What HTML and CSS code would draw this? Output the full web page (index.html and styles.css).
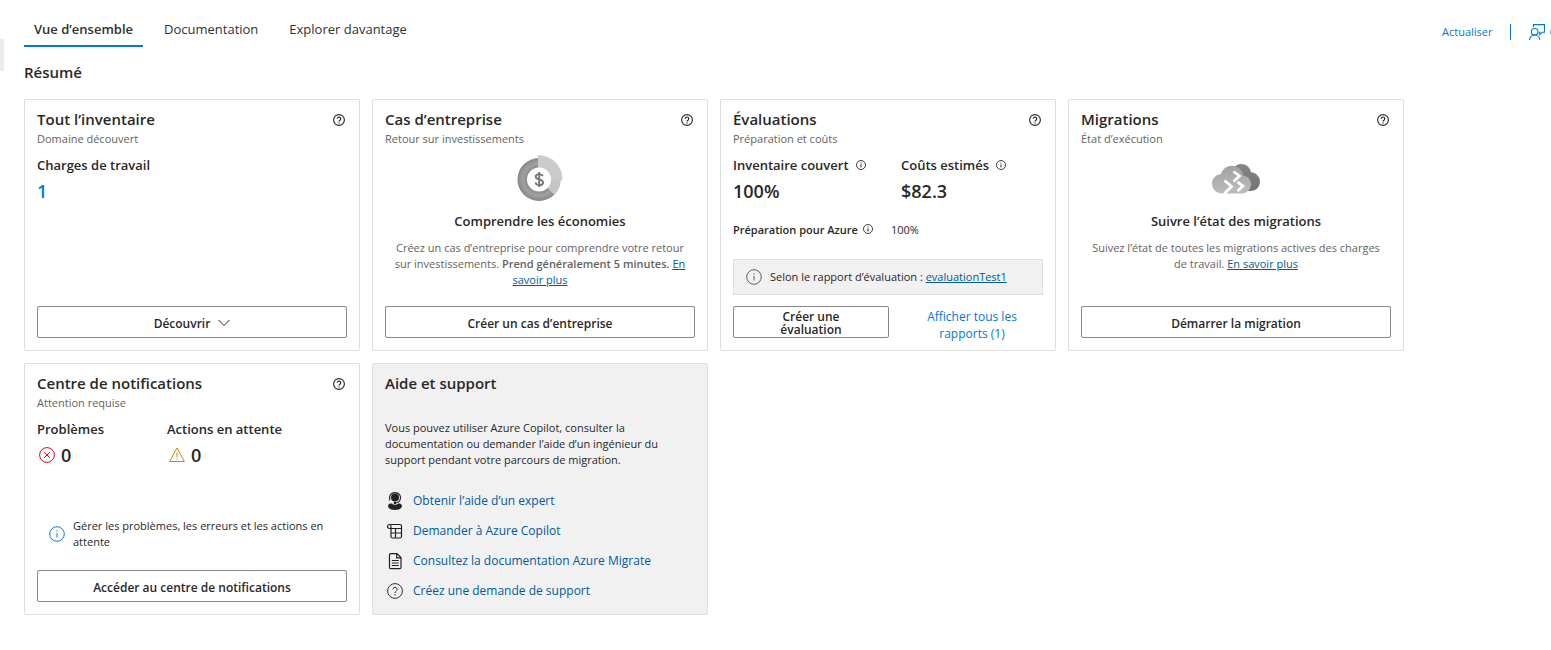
FILE: index.html
```html
<!DOCTYPE html>
<html lang="fr">
<head>
<meta charset="utf-8">
<meta name="viewport" content="width=device-width, initial-scale=1">
<title>Vue d’ensemble</title>
<link rel="stylesheet" href="styles.css">
</head>
<body>
<svg class="sprite" aria-hidden="true">
  <symbol id="help" viewBox="0 0 16 16"><circle cx="8" cy="8" r="7.2" fill="none" stroke="currentColor" stroke-width="1.5"/><path d="M5.7 6.3a2.3 2.3 0 1 1 3.5 2C8.4 8.800 8 9.100 8 10" fill="none" stroke="currentColor" stroke-width="1.5"/><circle cx="8" cy="11.900" r=".9" fill="currentColor"/></symbol>
  <symbol id="help-thin" viewBox="0 0 16 16"><circle cx="8" cy="8" r="7.400" fill="none" stroke="currentColor"/><path d="M5.900 6.300a2.100 2.100 0 1 1 3.200 1.900C8.400 8.700 8 9.100 8 10" fill="none" stroke="currentColor"/><circle cx="8" cy="11.800" r=".7" fill="currentColor"/></symbol>
  <symbol id="info" viewBox="0 0 16 16"><circle cx="8" cy="8" r="7.300" fill="none" stroke="currentColor"/><path d="M8 7v4.500" stroke="currentColor"/><circle cx="8" cy="4.900" r=".7" fill="currentColor"/></symbol>
  <symbol id="info-small" viewBox="0 0 10 10"><circle cx="5" cy="5" r="4.500" fill="none" stroke="currentColor" stroke-width=".9"/><path d="M5 4.400v3" stroke="currentColor"/><path d="M5 2.500v1" stroke="currentColor"/></symbol>
</svg>
<span class="rail"></span>
<header class="topbar">
  <nav class="tabs">
    <a class="tab tab-active" href="#apercu">Vue d’ensemble</a>
    <a class="tab" href="#documentation">Documentation</a>
    <a class="tab" href="#explorer">Explorer davantage</a>
  </nav>
  <div class="toolbar">
    <a class="tool" href="#actualiser">Actualiser</a>
    <span class="divider"></span>
    <a class="tool" href="#commentaires"><svg class="icon-16" viewBox="0 0 16 16" fill="none" stroke="currentColor" stroke-width="1.100"><circle cx="5.700" cy="7.800" r="3.300"/><path d="M.6 16c0-2.900 2.300-5 5.100-5s5.100 2.100 5.100 5M4.500 3V.6h11v7.700h-2.200l-2.500 2.300V8.300H9.500"/></svg>Commentaires</a>
  </div>
</header>
<main class="content">
  <h1 class="heading">Résumé</h1>
  <div class="cards">
    <section class="card">
      <div class="card-head"><h2 class="card-title">Tout l’inventaire</h2><button class="help" aria-label="Aide"><svg class="icon-12"><use href="#help"/></svg></button></div>
      <p class="subtitle">Domaine découvert</p>
      <h3 class="label">Charges de travail</h3>
      <a class="value value-link" href="#charges">1</a>
      <button class="btn">Découvrir<svg class="chevron" viewBox="0 0 12 8" fill="none" stroke="currentColor"><path d="M.5 1 6 6.500 11.500 1"/></svg></button>
    </section>

    <section class="card">
      <div class="card-head"><h2 class="card-title">Cas d’entreprise</h2><button class="help" aria-label="Aide"><svg class="icon-12"><use href="#help"/></svg></button></div>
      <p class="subtitle">Retour sur investissements</p>
      <div class="empty">
        <svg class="art" viewBox="0 0 48 48">
          <defs><radialGradient id="ring" cx=".5" cy=".5" r=".5"><stop offset=".5" stop-color="#858585"/><stop offset=".75" stop-color="#a0a0a0"/><stop offset="1" stop-color="#868686"/></radialGradient></defs>
          <circle cx="23" cy="24.500" r="21.500" fill="url(#ring)"/>
          <path d="M23 24.500V3c12 0 21.500 9.600 21.500 21.500 0 6-2.400 11.300-6.300 15.200z" fill="#c6c6c6"/>
          <path d="M22 24.500V.2c14 0 24.500 10.600 24.500 24.500z" fill="#cbcbcb"/>
          <circle cx="23" cy="24.500" r="12" fill="#fff"/>
          <path d="M26.700 21.300c-.5-1.500-1.900-2.200-3.500-2.200-2 0-3.500 1-3.500 2.600 0 3.600 7.400 1.900 7.400 5.700 0 1.700-1.600 2.700-3.700 2.700-2 0-3.500-.9-4-2.600M23.200 17v15" fill="none" stroke="#777" stroke-width="1.900"/>
        </svg>
        <h3 class="empty-title">Comprendre les économies</h3>
        <p class="empty-text">Créez un cas d’entreprise pour comprendre votre retour sur investissements. <strong class="strong">Prend généralement 5 minutes.</strong> <a class="link" href="#plus">En savoir plus</a></p>
      </div>
      <button class="btn">Créer un cas d’entreprise</button>
    </section>

    <section class="card">
      <div class="card-head"><h2 class="card-title">Évaluations</h2><button class="help" aria-label="Aide"><svg class="icon-12"><use href="#help"/></svg></button></div>
      <p class="subtitle">Préparation et coûts</p>
      <div class="pair">
        <div><h3 class="label">Inventaire couvert<svg class="icon-10"><use href="#info-small"/></svg></h3><p class="value">100%</p></div>
        <div><h3 class="label">Coûts estimés<svg class="icon-10"><use href="#info-small"/></svg></h3><p class="value">$82.3</p></div>
      </div>
      <p class="readiness"><span class="readiness-name">Préparation pour Azure<svg class="icon-10"><use href="#info-small"/></svg></span><span>100%</span></p>
      <p class="banner"><svg class="icon-16"><use href="#info"/></svg><span>Selon le rapport d’évaluation : <a class="link" href="#evaluation">evaluationTest1</a></span></p>
      <div class="pair actions"><button class="btn btn-tight">Créer une évaluation</button><a class="reports" href="#rapports">Afficher tous les rapports (1)</a></div>
    </section>

    <section class="card">
      <div class="card-head"><h2 class="card-title">Migrations</h2><button class="help" aria-label="Aide"><svg class="icon-12"><use href="#help"/></svg></button></div>
      <p class="subtitle">État d’exécution</p>
      <div class="empty">
        <svg class="art" viewBox="0 5 48 48">
          <defs><linearGradient id="back" x2="0" y2="1"><stop stop-color="#858585"/><stop offset="1" stop-color="#747474"/></linearGradient><linearGradient id="front" x2="0" y2="1"><stop stop-color="#a2a2a2"/><stop offset="1" stop-color="#bcbcbc"/></linearGradient></defs>
          <path d="M20 36c-4-6-2-13 1-17 1.500-3 4.500-5 8.200-5 5 0 9 3.500 9.800 8.300 5 .4 9 4.200 9 9.200 0 5.500-4 9.500-9.500 9.500H28z" fill="url(#back)"/>
          <path d="M10 43.500C4.400 43.500 0 39.200 0 33.800c0-5.200 3.700-9 9-9.700 1.400-5 5.800-8.300 11-8.300 5.800 0 10.200 4 11.200 9.700 4.500.5 7.800 4.200 7.800 8.800 0 5-4 9.200-9.200 9.200z" fill="url(#front)"/>
          <path d="M12.500 30.500 19.500 36.500l-7 7M21.500 21.500l6 4.500-6 5.500M25.500 32l5.500 4-5.500 5" fill="none" stroke="#fff" stroke-width="2.800"/>
        </svg>
        <h3 class="empty-title">Suivre l’état des migrations</h3>
        <p class="empty-text">Suivez l’état de toutes les migrations actives des charges de travail. <a class="link" href="#migrations">En savoir plus</a></p>
      </div>
      <button class="btn">Démarrer la migration</button>
    </section>

    <section class="card">
      <div class="card-head"><h2 class="card-title">Centre de notifications</h2><button class="help" aria-label="Aide"><svg class="icon-12"><use href="#help"/></svg></button></div>
      <p class="subtitle">Attention requise</p>
      <div class="counts">
        <div><h3 class="label">Problèmes</h3><p class="value count"><svg class="icon-16 red" viewBox="0 0 16 16" fill="none" stroke="currentColor"><circle cx="8" cy="8" r="7.400"/><path d="m5.200 5.200 5.600 5.600m0-5.600-5.600 5.600"/></svg>0</p></div>
        <div><h3 class="label">Actions en attente</h3><p class="value count"><svg class="icon-16 orange" viewBox="0 0 16 16" fill="none" stroke="currentColor"><path d="M8 .9.6 14.500h14.800zM8 5.500v5m0 1.200v1.100"/></svg>0</p></div>
      </div>
      <p class="note"><svg class="icon-16 blue"><use href="#info"/></svg><span>Gérer les problèmes, les erreurs et les actions en attente</span></p>
      <button class="btn">Accéder au centre de notifications</button>
    </section>

    <section class="card card-help">
      <div class="card-head"><h2 class="card-title">Aide et support</h2></div>
      <p class="support-text">Vous pouvez utiliser Azure Copilot, consulter la documentation ou demander l’aide d’un ingénieur du support pendant votre parcours de migration.</p>
      <ul class="support-links">
        <li><a class="support-link" href="#expert"><svg class="support-icon" viewBox="0 0 16 18"><circle cx="8" cy="5.500" r="4" fill="#222"/><path d="M2.800 8.500C1.500 3.500 4 .6 8 .6s6.500 2.900 5.200 7C12.500 10 11 10.800 8.500 10.800" fill="none" stroke="#222" stroke-width="1.100"/><path d="M3 11.500h2c1 1.700 5 1.700 6 0h2c3.500 1.500 2.500 6.500-5 6.500s-8.500-5-5-6.500z" fill="#222"/><circle cx="8" cy="11" r="1.300" fill="#222"/></svg>Obtenir l’aide d’un expert</a></li>
        <li><a class="support-link" href="#copilot"><svg class="support-icon" viewBox="0 0 16 18" fill="none" stroke="#222" stroke-width="1.200"><path d="M3.500 6.500h-1a1.900 1.900 0 0 1 0-4H13a1.500 1.500 0 0 1 1.500 1.500v10.500A1.500 1.500 0 0 1 13 16H5.500A1.500 1.500 0 0 1 4 14.500v-10c0-1.200-.5-2-1.500-2M3.500 6.500h11M4 11h10.500M8.500 6.500V16"/></svg>Demander à Azure Copilot</a></li>
        <li><a class="support-link" href="#docs"><svg class="support-icon" viewBox="0 0 16 18" fill="none" stroke="#222" stroke-width="1.200"><path d="M3.700 1.600H10l4 4v9.900a1.200 1.200 0 0 1-1.200 1.200H3.700a1.200 1.200 0 0 1-1.200-1.200V2.800a1.200 1.200 0 0 1 1.200-1.200zM9.700 1.600v4.300H14M4.800 8.500h7M4.800 11h7M4.800 13.500h7"/></svg>Consultez la documentation Azure Migrate</a></li>
        <li><a class="support-link" href="#support"><svg class="support-icon dark"><use href="#help-thin"/></svg>Créez une demande de support</a></li>
      </ul>
    </section>
  </div>
</main>
</body>
</html>
```
FILE: styles.css
```css
* { box-sizing: border-box; }
body {
  margin: 0;
  background: #fff;
  color: #292827;
  font: 11px/16px "Open Sans", "Noto Sans", sans-serif;
}
h1, h2, h3, p, ul { margin: 0; padding: 0; }
h1, h2, h3 { font-weight: 600; }
ul { list-style: none; }
a { text-decoration: none; }
button { font-family: inherit; color: inherit; cursor: pointer; }
svg { flex: none; }

.sprite { position: absolute; width: 0; height: 0; }
.rail { position: absolute; top: 39px; left: 0; width: 4px; height: 32px; background: #edebe9; }

.topbar { display: flex; justify-content: space-between; padding: 12px 0 0 24px; }
.tabs { display: flex; gap: 11px; }
.tab { padding: 8px 10px 7px; border-bottom: 2px solid transparent; color: #323130; font-size: 13px; line-height: 18px; white-space: nowrap; }
.tab-active { border-color: #0078d4; font-weight: 600; }
.toolbar { display: flex; align-items: center; gap: 18px; width: 109px; padding-top: 4px; overflow: hidden; }
.tool { display: flex; flex: none; align-items: center; gap: 4px; color: #0078d4; }
.divider { flex: none; width: 1px; height: 16px; background: #0078d4; }

.content { padding: 14px 24px; }
.heading { font-size: 15px; line-height: 22px; }
.cards { display: grid; grid-template-columns: repeat(auto-fill, 336px); gap: 12px; margin-top: 16px; }
.card { display: flex; flex-direction: column; min-height: 252px; padding: 8px 12px 12px; border: 1px solid #e1dfdd; border-radius: 2px; }
.card-help { background: #f1f1f1; }
.card-head { display: flex; align-items: center; justify-content: space-between; }
.card-title { font-size: 15px; line-height: 22px; }
.help { display: flex; padding: 4px 2px 2px; border: 0; background: none; }
.subtitle { color: #646260; line-height: 18px; }
.label { margin-top: 8px; font-size: 13px; line-height: 18px; white-space: nowrap; }
.value { margin-top: 4px; font-size: 18px; line-height: 26px; font-weight: 600; }
.value-link { align-self: flex-start; color: #0078d4; }

.icon-10 { width: 10px; height: 10px; margin-left: 7px; }
.icon-12 { width: 12px; height: 12px; }
.icon-16 { width: 16px; height: 16px; }
.chevron { width: 12px; height: 8px; }
.red { color: #e00b1c; }
.orange { color: #d67f10; }
.blue { color: #1a6fe0; }
.dark { color: #323130; }

.btn { display: flex; align-items: center; justify-content: center; gap: 8px; min-height: 32px; margin-top: auto; padding: 2px 8px 0; border: 1px solid #8a8886; border-radius: 2px; background: #fff; font-size: 12px; line-height: 13px; font-weight: 600; }
.btn-tight { padding: 2px 32px 0; }

.empty { display: flex; flex-direction: column; align-items: center; margin-top: 7px; text-align: center; }
.art { width: 48px; height: 48px; }
.empty-title { margin-top: 9px; font-size: 13px; line-height: 18px; }
.empty-text { margin-top: 10px; padding: 0 4px; color: #646260; }
.strong { font-weight: 600; }
.link { color: #005a9e; text-decoration: underline; }

.pair { display: grid; grid-template-columns: 156px 1fr; gap: 12px; }
.readiness { display: flex; gap: 18px; margin-top: 18px; }
.readiness-name { font-weight: 600; }
.readiness .icon-10 { margin-left: 5px; }
.banner { display: flex; align-items: center; gap: 8px; margin-top: 21px; padding: 9px 12px; border: 1px solid #e1dfdd; background: #f1f1f1; }
.banner .icon-16 { color: #605e5c; }
.actions { align-items: start; margin-top: auto; }
.reports { margin-bottom: -4px; padding: 2px 20px 0; color: #0078d4; font-size: 12px; line-height: 17px; text-align: center; }

.counts { display: flex; gap: 63px; }
.count { display: flex; align-items: center; gap: 6px; padding-left: 2px; }
.note { display: flex; align-items: center; gap: 8px; margin-top: auto; padding: 0 12px 20px; }
.note + .btn { margin-top: 0; }

.support-text { margin-top: 26px; }
.support-links { display: grid; gap: 10px; margin-top: 23px; }
.support-link { display: flex; align-items: center; gap: 10px; padding-left: 2px; color: #005a9e; font-size: 12px; line-height: 20px; }
.support-icon { width: 16px; height: 18px; }
```
